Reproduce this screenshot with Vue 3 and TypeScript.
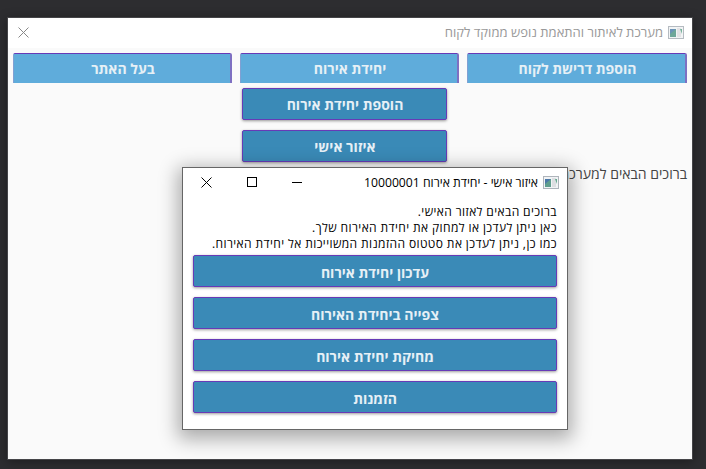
<script setup lang="ts">
interface Item {
  label: string
  width: number
}

const tabs: Item[] = [
  { label: 'הוספת דרישת לקוח', width: 220 },
  { label: 'יחידת אירוח', width: 219 },
  { label: 'בעל האתר', width: 219 },
]
const menu: string[] = ['הוספת יחידת אירוח', 'איזור אישי']
const messages: string[] = [
  'ברוכים הבאים לאזור האישי.',
  'כאן ניתן לעדכן או למחוק את יחידת האירוח שלך.',
  'כמו כן, ניתן לעדכן את סטטוס ההזמנות המשוייכות אל יחידת האירוח.',
]
const actions: string[] = ['עדכון יחידת אירוח', 'צפייה ביחידת האירוח', 'מחיקת יחידת אירוח', 'הזמנות']
</script>

<template>
  <div class="desktop" dir="rtl">
    <main class="window">
      <header class="titlebar">
        <svg class="app-icon faded" width="16" height="13" viewBox="0 0 16 13">
          <rect x=".5" y=".5" width="15" height="12" fill="#f1f3f5" stroke="#aeb4bb" />
          <rect x="2" y="3" width="6" height="8" fill="#5f9e8e" />
          <path d="M2 3h6L2 8z" fill="#5b88b0" />
          <rect x="9" y="2" width="4" height="9" fill="#e0e1e3" />
          <path d="M12 3h2v5z" fill="#68aa91" />
        </svg>
        <span class="title">מערכת לאיתור והתאמת נופש ממוקד לקוח</span>
        <svg class="close" width="11" height="11" viewBox="0 0 11 11"><path d="M.5.5l10 10M10.500.5l-10 10" stroke="#888" fill="none" /></svg>
      </header>
      <nav class="tabs">
        <button v-for="tab in tabs" :key="tab.label" class="tab" :style="{ width: tab.width + 'px' }"><span>{{ tab.label }}</span></button>
      </nav>
      <div class="menu">
        <button v-for="item in menu" :key="item" class="action"><span>{{ item }}</span></button>
      </div>
      <p class="welcome">ברוכים הבאים למערכת</p>
    </main>

    <section class="dialog">
      <header class="dialog-bar">
        <svg class="app-icon" width="16" height="13" viewBox="0 0 16 13">
          <rect x=".5" y=".5" width="15" height="12" fill="#f1f3f5" stroke="#aeb4bb" />
          <rect x="2" y="3" width="6" height="8" fill="#5f9e8e" />
          <path d="M2 3h6L2 8z" fill="#4b78a8" />
          <rect x="9" y="2" width="4" height="9" fill="#dddfe2" />
          <path d="M12 3h2v5z" fill="#68aa91" />
        </svg>
        <span class="dialog-title">איזור אישי - יחידת אירוח 10000001</span>
        <svg class="controls" width="102" height="11" viewBox="0 0 102 11" fill="none" stroke="#000">
          <path d="M.5.5l10 10M10.500.5l-10 10M91 5.500h10" />
          <rect x="46.500" y=".5" width="9" height="9" />
        </svg>
      </header>
      <div class="dialog-body">
        <p v-for="line in messages" :key="line" class="message">{{ line }}</p>
        <div class="actions">
          <button v-for="item in actions" :key="item" class="action"><span>{{ item }}</span></button>
        </div>
      </div>
    </section>
  </div>
</template>

<style>
body {
  margin: 0;
  overflow: hidden;
}
</style>

<style scoped>
.desktop {
  position: relative;
  box-sizing: border-box;
  width: 706px;
  height: 469px;
  padding: 17px 13px 9px 7px;
  background: #2d2d30;
  font-family: "Open Sans", "Noto Sans", sans-serif;
}
.window {
  box-sizing: border-box;
  width: 686px;
  height: 443px;
  border: 1px solid #454548;
  background: #fafafa;
  box-shadow: 0 2px 10px rgba(0, 0, 0, 0.35);
  overflow: hidden;
}
.titlebar {
  display: flex;
  align-items: center;
  box-sizing: border-box;
  height: 30px;
  padding: 0 8px 2px 10px;
  background: #fff;
}
.title {
  margin-right: 5px;
  color: #999;
  font-size: 13.05px;
  line-height: 18px;
  white-space: nowrap;
}
.faded {
  opacity: 0.9;
}
.close {
  margin-right: auto;
}
.tabs {
  display: flex;
  justify-content: space-between;
  height: 30px;
  padding: 5px;
}
button {
  display: flex;
  align-items: center;
  justify-content: center;
  box-sizing: border-box;
  padding: 0;
  font-family: inherit;
  font-size: 14px;
  font-weight: 700;
  color: #e6f0f6;
  white-space: nowrap;
}
.tab {
  border: 1px solid #673ab7;
  border-right: 2px solid #7e70c2;
  border-left-color: #80a0d3;
  border-bottom: 0;
  border-radius: 2px 2px 0 0;
  background: #5facdb;
}
.tab span {
  padding-left: 2px;
}
.menu {
  display: flex;
  flex-direction: column;
  gap: 10px;
  width: 205px;
  margin-right: 245px;
}
.action {
  width: 100%;
  height: 32px;
  border: 1px solid #673ab7;
  border-radius: 2px;
  background: #3a8ab7;
  box-shadow: 0 1px 3px rgba(0, 0, 0, 0.4);
}
.action span {
  padding-top: 2px;
}
.menu .action span {
  padding: 0 0 0 1px;
}
.welcome {
  margin: 2px 5px 0 0;
  color: #444;
  font-size: 14px;
  line-height: 20px;
}
.dialog {
  position: absolute;
  left: 182px;
  top: 167px;
  box-sizing: border-box;
  width: 386px;
  height: 263px;
  border: 1px solid #666;
  background: #fff;
  box-shadow: 0 5px 18px 4px rgba(0, 0, 0, 0.32);
}
.dialog-bar {
  display: flex;
  align-items: center;
  box-sizing: border-box;
  height: 30px;
  padding: 0 8px 1px 18px;
}
.dialog-title {
  margin-right: 5px;
  color: #000;
  font-size: 12.2px;
  line-height: 16px;
  white-space: nowrap;
}
.controls {
  margin-right: auto;
}
.dialog-body {
  padding: 6px 10px 0;
}
.message {
  margin: 0;
  color: #000;
  font-size: 12px;
  letter-spacing: 0.4px;
  line-height: 16px;
  white-space: nowrap;
}
.actions {
  display: flex;
  flex-direction: column;
  gap: 10px;
  margin-top: 3px;
}
</style>
